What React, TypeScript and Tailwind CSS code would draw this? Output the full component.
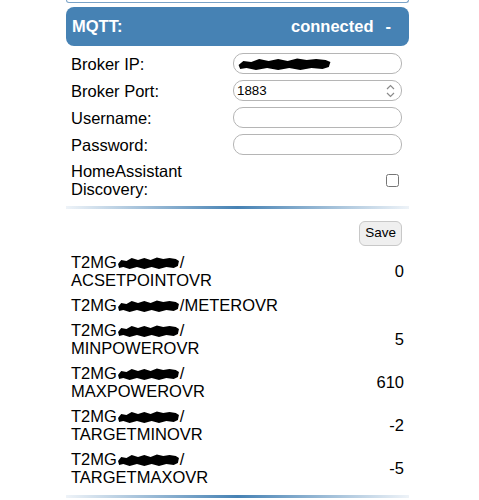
import React from "react";

const font = { fontFamily: '"Liberation Sans", Arial, sans-serif' };

// black marker scribble used where the original was redacted
function Scribble({ w, h }: { w: number; h: number }) {
  return (
    <svg width={w} height={h} viewBox="0 0 60 12" preserveAspectRatio="none" className="inline-block align-[-1px]">
      <path
        d="M1 7 L4 3 L9 4 L14 1 L20 3 L26 1 L32 3 L38 0.5 L44 2 L50 1 L56 2 L59 4 L58 9 L54 11 L47 10 L40 12 L33 10 L26 12 L19 10 L12 12 L6 10 L2 11 Z"
        fill="#000"
      />
    </svg>
  );
}

type Item = { lines: React.ReactNode[]; value: string };

const blob = <Scribble w={63} h={12} />;

const items: Item[] = [
  { lines: [<>T2MG{blob}/</>, "ACSETPOINTOVR"], value: "0" },
  { lines: [<>T2MG{blob}/METEROVR</>], value: "" },
  { lines: [<>T2MG{blob}/</>, "MINPOWEROVR"], value: "5" },
  { lines: [<>T2MG{blob}/</>, "MAXPOWEROVR"], value: "610" },
  { lines: [<>T2MG{blob}/</>, "TARGETMINOVR"], value: "-2" },
  { lines: [<>T2MG{blob}/</>, "TARGETMAXOVR"], value: "-5" },
];

function Divider({ className = "" }: { className?: string }) {
  return (
    <div
      className={
        "h-[3px] bg-[linear-gradient(to_right,#eef3f8,#4682b4,#eef3f8)] " + className
      }
    />
  );
}

function Field({ label, children }: { label: string; children: React.ReactNode }) {
  return (
    <div className="grid grid-cols-[162px_169px] items-center py-[3px]">
      <div className="text-[16.5px] leading-[18px] text-black">{label}</div>
      <div className="relative h-[21px]">{children}</div>
    </div>
  );
}

const inputCls =
  "block w-full h-[21px] rounded-[10px] border border-[#b5b5b5] bg-white px-[3px] text-[13.33px] leading-[15px] text-black outline-none";

export default function App() {
  return (
    <div className="min-h-[500px] bg-white" style={font}>
      <div className="ml-[66px] w-[343px]">
        {/* bottom of previous panel */}
        <div className="h-[3px] border-x border-b border-[#7aa3c8] rounded-b-[6px]" />

        <div className="mt-[4px] h-[39px] rounded-[8px] bg-[#4682b4] flex items-center justify-between pl-[6px] pr-[18px] text-white font-bold text-[16.5px]">
          <span>MQTT:</span>
          <span>
            connected<span className="ml-[12px]">-</span>
          </span>
        </div>

        <div className="mt-[4px] px-[5px]">
          <Field label="Broker IP:">
            <input className={inputCls} readOnly value="" />
            <span className="absolute left-[4px] top-[3px] leading-none">
              <Scribble w={95} h={12} />
            </span>
          </Field>
          <Field label="Broker Port:">
            <input className={inputCls} readOnly value="1883" />
            <svg
              width="9"
              height="14"
              viewBox="0 0 9 14"
              className="absolute right-[7px] top-[4px]"
            >
              <path d="M1 5 L4.5 1.5 L8 5" stroke="#8a8a8a" strokeWidth="1.2" fill="none" />
              <path d="M1 9 L4.5 12.5 L8 9" stroke="#8a8a8a" strokeWidth="1.2" fill="none" />
            </svg>
          </Field>
          <Field label="Username:">
            <input className={inputCls} readOnly value="" />
          </Field>
          <Field label="Password:">
            <input className={inputCls} readOnly value="" type="password" />
          </Field>
          <div className="grid grid-cols-[162px_169px] items-center py-[4px]">
            <div className="text-[16.5px] leading-[18px] text-black">HomeAssistant Discovery:</div>
            <div className="flex justify-end">
              <input type="checkbox" className="block w-[13px] h-[13px] m-[3px]" readOnly />
            </div>
          </div>
        </div>

        <Divider className="mt-[4px]" />

        <div className="mt-[12px] flex justify-end pr-[7px]">
          <button className="h-[25px] px-[5px] rounded-[6px] border border-[#c8c8c8] bg-[#efefef] text-[13.5px] text-black">
            Save
          </button>
        </div>

        <div className="mt-[3.5px] px-[5px]">
          {items.map((it, i) => (
            <div key={i} className="flex items-center justify-between py-[3.5px] text-[16.5px] leading-[18px] text-black">
              <div>
                {it.lines.map((l, j) => (
                  <div key={j} className="whitespace-nowrap">
                    {l}
                  </div>
                ))}
              </div>
              <div>{it.value}</div>
            </div>
          ))}
        </div>

        <Divider className="mt-[5px]" />
      </div>
    </div>
  );
}
